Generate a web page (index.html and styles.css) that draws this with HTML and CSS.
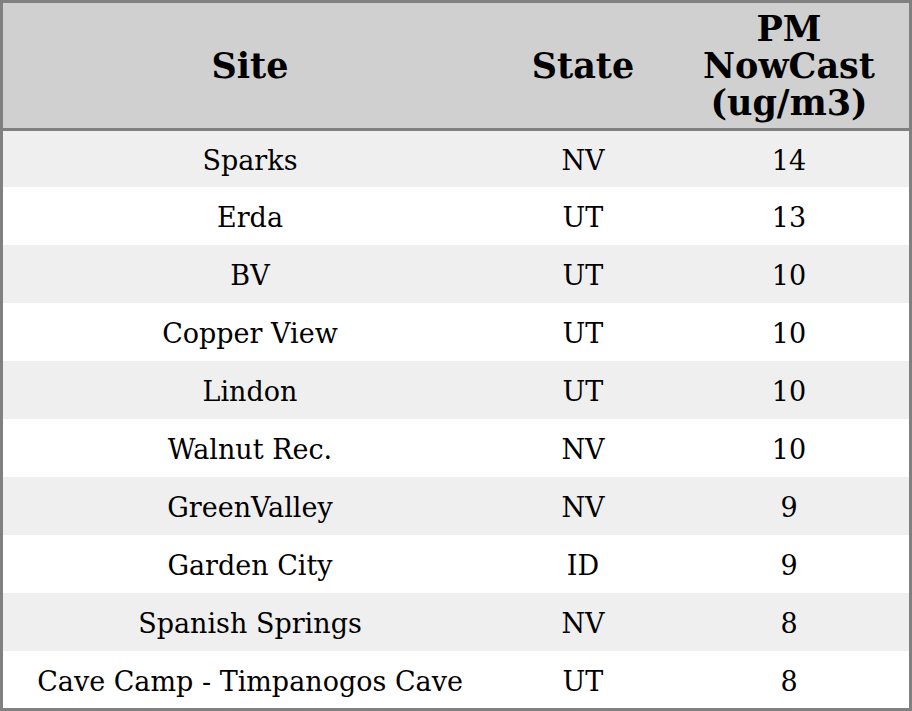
FILE: index.html
```html
<!DOCTYPE html>
<html>
<head>
<meta charset="utf-8">
<link rel="stylesheet" href="styles.css">
</head>
<body>
<div class="table">
  <div class="row head">
    <div class="cell">Site</div>
    <div class="cell">State</div>
    <div class="cell">PM<br>NowCast<br>(ug/m3)</div>
  </div>
  <div class="row odd first"><div class="cell">Sparks</div><div class="cell">NV</div><div class="cell">14</div></div>
  <div class="row"><div class="cell">Erda</div><div class="cell">UT</div><div class="cell">13</div></div>
  <div class="row odd"><div class="cell">BV</div><div class="cell">UT</div><div class="cell">10</div></div>
  <div class="row"><div class="cell">Copper View</div><div class="cell">UT</div><div class="cell">10</div></div>
  <div class="row odd"><div class="cell">Lindon</div><div class="cell">UT</div><div class="cell">10</div></div>
  <div class="row"><div class="cell">Walnut Rec.</div><div class="cell">NV</div><div class="cell">10</div></div>
  <div class="row odd"><div class="cell">GreenValley</div><div class="cell">NV</div><div class="cell">9</div></div>
  <div class="row"><div class="cell">Garden City</div><div class="cell">ID</div><div class="cell">9</div></div>
  <div class="row odd"><div class="cell">Spanish Springs</div><div class="cell">NV</div><div class="cell">8</div></div>
  <div class="row last"><div class="cell">Cave Camp - Timpanogos Cave</div><div class="cell">UT</div><div class="cell">8</div></div>
</div>
</body>
</html>
```
FILE: styles.css
```css
html, body {
  margin: 0;
  padding: 0;
  background: #ffffff;
}
.table {
  width: 912px;
  height: 711px;
  box-sizing: border-box;
  border: 3px solid #808080;
  font-family: "DejaVu Serif", serif;
  color: #000;
  display: flex;
  flex-direction: column;
}
.row {
  display: grid;
  grid-template-columns: 494px 172px 240px;
  height: 58px;
  background: #ffffff;
  font-size: 27px;
  line-height: 32px;
}
.row.odd {
  background: #efefef;
}
.row.first {
  height: 56px;
}
.row.last {
  height: 57px;
}
.row.head {
  height: 125px;
  background: #d0d0d0;
  border-bottom: 3px solid #808080;
  font-size: 35px;
  font-weight: bold;
  line-height: 37px;
}
.cell {
  display: flex;
  align-items: center;
  justify-content: center;
  text-align: center;
  white-space: nowrap;
}
.row:not(.head) .cell {
  padding-top: 4px;
}
```
